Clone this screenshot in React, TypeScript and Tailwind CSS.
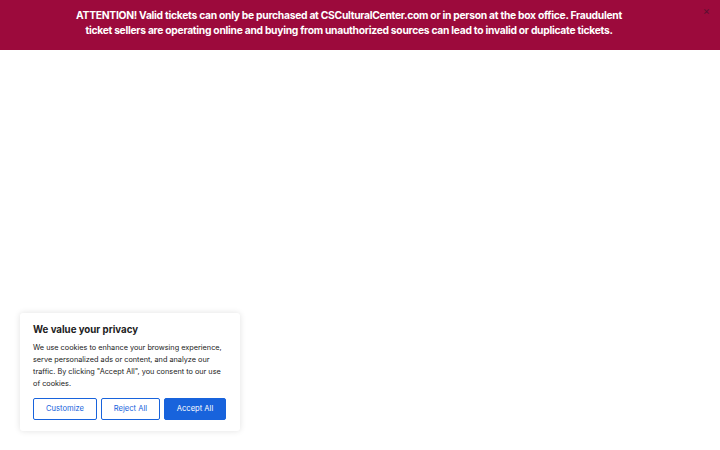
export default function App() {
  return (
    <div className="relative w-[720px] h-[450px] bg-white overflow-hidden" style={{ fontFamily: "Inter, 'Open Sans', sans-serif" }}>
      <div className="relative h-[50px] bg-[#9c0a3c] flex flex-col items-center justify-center pb-[4px] pr-[22px] text-white font-bold text-[10.3px] leading-[15px] tracking-[-0.28px]">
        <div>ATTENTION! Valid tickets can only be purchased at CSCulturalCenter.com or in person at the box office. Fraudulent</div>
        <div>ticket sellers are operating online and buying from unauthorized sources can lead to invalid or duplicate tickets.</div>
        <span className="absolute right-[10px] top-[4px] text-[#5a1030] text-[11px] font-normal tracking-normal">×</span>
      </div>
      <div className="absolute left-[20px] top-[313px] w-[220px] bg-white rounded-[3px] shadow-[0_0_6px_rgba(0,0,0,0.12)] px-[13px] pt-[10px] pb-[11px]">
        <div className="text-[9.7px] font-bold text-[#212121] leading-[14px]">We value your privacy</div>
        <p className="mt-[5px] text-[7.3px] leading-[12px] text-[#212121] whitespace-nowrap">
          We use cookies to enhance your browsing experience,<br />
          serve personalized ads or content, and analyze our<br />
          traffic. By clicking "Accept All", you consent to our use<br />
          of cookies.
        </p>
        <div className="mt-[8px] flex gap-[4px]">
          <button className="w-[64px] h-[22px] border-[1.5px] border-[#1863dc] text-[#1863dc] text-[7.6px] rounded-[2px] bg-white">Customize</button>
          <button className="w-[59px] h-[22px] border-[1.5px] border-[#1863dc] text-[#1863dc] text-[7.6px] rounded-[2px] bg-white">Reject All</button>
          <button className="w-[62px] h-[22px] border-[1.5px] border-[#1863dc] bg-[#1863dc] text-white text-[7.6px] rounded-[2px]">Accept All</button>
        </div>
      </div>
    </div>
  );
}
